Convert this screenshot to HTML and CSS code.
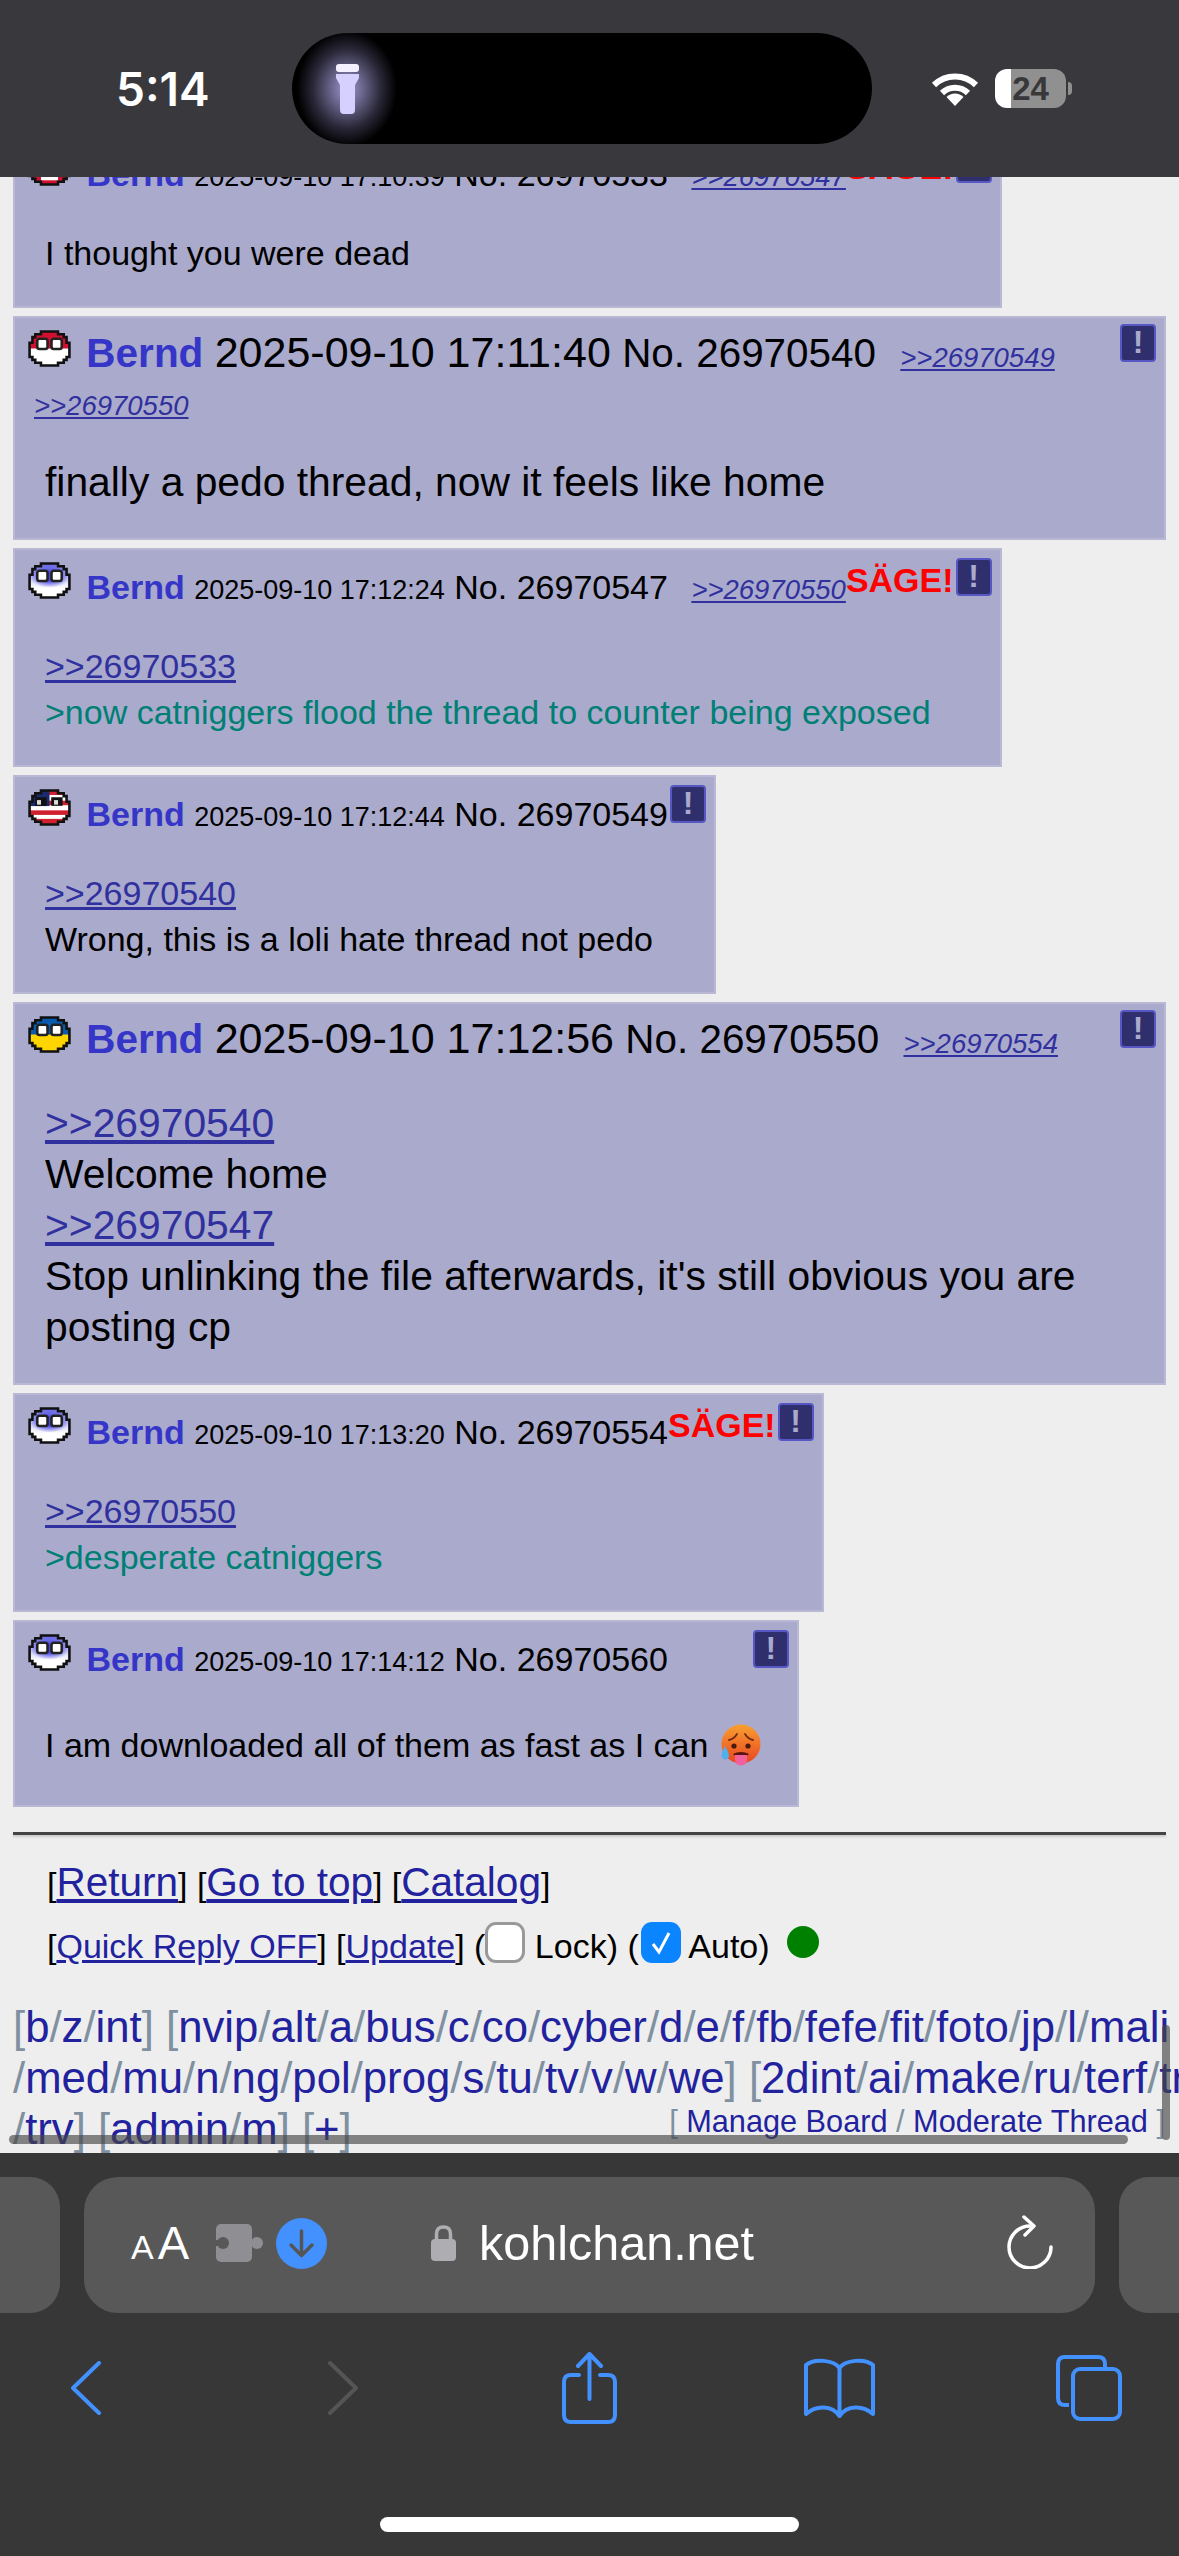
FILE: index.html
```html
<!DOCTYPE html>
<html lang="en">
<head>
    <meta charset="UTF-8">
    <meta name="viewport" content="width=device-width, initial-scale=1.0">
    <title>kohlchan.net</title>
    <link rel="stylesheet" href="styles.css">
</head>
<body>
    <!-- flag sprites -->
    <svg class="sprites" width="0" height="0">
        <defs>
            <clipPath id="ball"><path id="ball-shape" d="M5 1H11V2H13V3H14V5H15V10H14V11H13V12H11V13H5V12H3V11H2V10H1V5H2V3H3V2H5Z"/></clipPath>
            <linearGradient id="sage-fade" x1="0" y1="0" x2="0" y2="1">
                <stop offset="0.05" stop-color="#5a5ae0"/>
                <stop offset="0.35" stop-color="#b8b8f4"/>
                <stop offset="0.7" stop-color="#fff"/>
            </linearGradient>
            <radialGradient id="sage-glow">
                <stop offset="0.4" stop-color="#4a4ae0"/>
                <stop offset="1" stop-color="#4a4ae0" stop-opacity="0"/>
            </radialGradient>
            <g id="eyes">
                <rect x="3.7" y="3.6" width="3.6" height="3.6" rx="0.8" fill="#fff" stroke="#222" stroke-width="0.9"/>
                <rect x="8.7" y="3.6" width="3.6" height="3.6" rx="0.8" fill="#fff" stroke="#222" stroke-width="0.9"/>
            </g>
            <symbol id="flag-sage" viewBox="0.5 0.5 15 13">
                <g clip-path="url(#ball)">
                    <rect width="16" height="14" fill="url(#sage-fade)"/>
                    <ellipse cx="8" cy="5.500" rx="7" ry="4" fill="url(#sage-glow)"/>
                </g>
                <path d="M5 1H11V2H13V3H14V5H15V10H14V11H13V12H11V13H5V12H3V11H2V10H1V5H2V3H3V2H5Z" fill="none" stroke="#111" stroke-width="0.9"/>
                <use href="#eyes"/>
            </symbol>
            <symbol id="flag-pl" viewBox="0.5 0.5 15 13">
                <g clip-path="url(#ball)">
                    <rect width="16" height="14" fill="#fff"/>
                    <rect width="16" height="7" fill="#d01030"/>
                </g>
                <path d="M5 1H11V2H13V3H14V5H15V10H14V11H13V12H11V13H5V12H3V11H2V10H1V5H2V3H3V2H5Z" fill="none" stroke="#111" stroke-width="0.9"/>
                <use href="#eyes"/>
            </symbol>
            <symbol id="flag-red" viewBox="0.5 0.5 15 13">
                <g clip-path="url(#ball)">
                    <rect width="16" height="14" fill="#d01030"/>
                    <rect x="5" y="8" width="6" height="3.500" fill="#fff"/>
                </g>
                <path d="M5 1H11V2H13V3H14V5H15V10H14V11H13V12H11V13H5V12H3V11H2V10H1V5H2V3H3V2H5Z" fill="none" stroke="#111" stroke-width="0.9"/>
                <use href="#eyes"/>
            </symbol>
            <symbol id="flag-us" viewBox="0.5 0.5 15 13">
                <g clip-path="url(#ball)">
                    <rect width="16" height="14" fill="#fff"/>
                    <rect y="1" width="16" height="1.6" fill="#d02030"/>
                    <rect y="4.6" width="16" height="1.6" fill="#d02030"/>
                    <rect y="8" width="16" height="1.6" fill="#d02030"/>
                    <rect y="11" width="16" height="2" fill="#d02030"/>
                    <rect width="8" height="6.5" fill="#1a2a6c"/>
                    <rect x="3" y="3.4" width="4" height="3" fill="#111"/>
                    <rect x="8.6" y="3.4" width="4" height="3" fill="#111"/>
                    <rect x="3.6" y="4.4" width="1.4" height="1.6" fill="#ddd"/>
                    <rect x="9.6" y="4.4" width="1.4" height="1.6" fill="#ddd"/>
                </g>
                <path d="M5 1H11V2H13V3H14V5H15V10H14V11H13V12H11V13H5V12H3V11H2V10H1V5H2V3H3V2H5Z" fill="none" stroke="#111" stroke-width="0.9"/>
            </symbol>
            <symbol id="flag-ua" viewBox="0.5 0.5 15 13">
                <g clip-path="url(#ball)">
                    <rect width="16" height="14" fill="#ffd500"/>
                    <rect width="16" height="7" fill="#0a5cb0"/>
                </g>
                <path d="M5 1H11V2H13V3H14V5H15V10H14V11H13V12H11V13H5V12H3V11H2V10H1V5H2V3H3V2H5Z" fill="none" stroke="#111" stroke-width="0.9"/>
                <use href="#eyes"/>
            </symbol>
        </defs>
    </svg>

    <div class="phone">
        <div class="status-bar">
            <span class="clock">5:14</span>
            <div class="island">
                <svg class="torch" width="25" height="50" viewBox="0 0 25 50">
                    <rect x="1" y="0" width="23" height="8" rx="3" fill="#f4f0ff"/>
                    <path d="M1 10H24V14L20 21V46Q20 50 16 50H9Q5 50 5 46V21L1 14Z" fill="#d6d0ff"/>
                </svg>
            </div>
            <svg class="wifi" width="48" height="34" viewBox="0 0 48 34" fill="none" stroke="#fff" stroke-width="6">
                <path d="M3 13A30 30 0 0 1 45 13"/>
                <path d="M11 21A18.5 18.5 0 0 1 37 21"/>
                <path d="M24 34L15.5 25A12 12 0 0 1 32.5 25Z" fill="#fff" stroke="none"/>
            </svg>
            <div class="battery">24</div>
            <div class="battery-nub"></div>
        </div>

        <div class="content">
            <div class="posts">
                <div class="post">
                    <div class="post-head">
                        <a class="report">!</a>
                        <svg class="flag"><use href="#flag-red"/></svg>
                        <span class="name">Bernd</span>
                        <span class="date">2025-09-10 17:10:39</span>
                        <span class="num">No. 26970533</span>
                        <a class="backlink">&gt;&gt;26970547</a><span class="sage">SÄGE!</span>
                    </div>
                    <div class="post-body">
                        <div>I thought you were dead</div>
                    </div>
                </div>

                <div class="post post-big post-wrapped">
                    <div class="post-head">
                        <a class="report">!</a>
                        <svg class="flag"><use href="#flag-pl"/></svg>
                        <span class="name">Bernd</span>
                        <span class="date">2025-09-10 17:11:40</span>
                        <span class="num">No. 26970540</span>
                        <a class="backlink">&gt;&gt;26970549</a>
                        <a class="backlink">&gt;&gt;26970550</a>
                    </div>
                    <div class="post-body">
                        <div>finally a pedo thread, now it feels like home</div>
                    </div>
                </div>

                <div class="post">
                    <div class="post-head">
                        <a class="report">!</a>
                        <svg class="flag"><use href="#flag-sage"/></svg>
                        <span class="name">Bernd</span>
                        <span class="date">2025-09-10 17:12:24</span>
                        <span class="num">No. 26970547</span>
                        <a class="backlink">&gt;&gt;26970550</a><span class="sage">SÄGE!</span>
                    </div>
                    <div class="post-body">
                        <div><a class="quote">&gt;&gt;26970533</a></div>
                        <div class="green">&gt;now catniggers flood the thread to counter being exposed</div>
                    </div>
                </div>

                <div class="post">
                    <div class="post-head">
                        <a class="report">!</a>
                        <svg class="flag"><use href="#flag-us"/></svg>
                        <span class="name">Bernd</span>
                        <span class="date">2025-09-10 17:12:44</span>
                        <span class="num">No. 26970549</span>
                    </div>
                    <div class="post-body">
                        <div><a class="quote">&gt;&gt;26970540</a></div>
                        <div>Wrong, this is a loli hate thread not pedo</div>
                    </div>
                </div>

                <div class="post post-big">
                    <div class="post-head">
                        <a class="report">!</a>
                        <svg class="flag"><use href="#flag-ua"/></svg>
                        <span class="name">Bernd</span>
                        <span class="date">2025-09-10 17:12:56</span>
                        <span class="num">No. 26970550</span>
                        <a class="backlink">&gt;&gt;26970554</a>
                    </div>
                    <div class="post-body">
                        <div><a class="quote">&gt;&gt;26970540</a></div>
                        <div>Welcome home</div>
                        <div><a class="quote">&gt;&gt;26970547</a></div>
                        <div>Stop unlinking the file afterwards, it's still obvious you are posting cp</div>
                    </div>
                </div>

                <div class="post">
                    <div class="post-head">
                        <a class="report">!</a>
                        <svg class="flag"><use href="#flag-sage"/></svg>
                        <span class="name">Bernd</span>
                        <span class="date">2025-09-10 17:13:20</span>
                        <span class="num">No. 26970554</span><span class="sage">SÄGE!</span>
                    </div>
                    <div class="post-body">
                        <div><a class="quote">&gt;&gt;26970550</a></div>
                        <div class="green">&gt;desperate catniggers</div>
                    </div>
                </div>

                <div class="post">
                    <div class="post-head">
                        <a class="report">!</a>
                        <svg class="flag"><use href="#flag-sage"/></svg>
                        <span class="name">Bernd</span>
                        <span class="date">2025-09-10 17:14:12</span>
                        <span class="num">No. 26970560</span>
                    </div>
                    <div class="post-body post-body-tall">
                        <div>I am downloaded all of them as fast as I can
                            <svg class="emoji" width="40" height="42" viewBox="0 0 40 42">
                                <defs>
                                    <linearGradient id="hot" x1="0" y1="0" x2="0" y2="1">
                                        <stop offset="0" stop-color="#f8a030"/>
                                        <stop offset="1" stop-color="#ea4420"/>
                                    </linearGradient>
                                </defs>
                                <circle cx="20" cy="20" r="19.5" fill="url(#hot)"/>
                                <path d="M8 16Q13 15 16 10M32 16Q27 15 24 10" fill="none" stroke="#6a2a10" stroke-width="1.8" stroke-linecap="round"/>
                                <circle cx="13" cy="22" r="2.6" fill="#4a1a0a"/>
                                <circle cx="27" cy="22" r="2.6" fill="#4a1a0a"/>
                                <path d="M12 30Q20 26 28 30Q26 33 20 33Q14 33 12 30Z" fill="#5a1410"/>
                                <path d="M14 31H26V35Q26 41.5 20 41.5Q14 41.5 14 35Z" fill="#f0609a"/>
                                <path d="M4 22Q0 30 0.5 32Q2 36 5 35.500Q8 34 8 31Q7 27 4 22Z" fill="#4fb0ee"/>
                            </svg>
                        </div>
                    </div>
                </div>
            </div>

            <hr class="divider">

            <div class="thread-links">
                [<a>Return</a>] [<a>Go to top</a>] [<a>Catalog</a>]
            </div>
            <div class="thread-tools">
                [<a>Quick Reply OFF</a>] [<a>Update</a>] (<span class="checkbox"></span> Lock) (<span class="checkbox checkbox-on"><svg width="24" height="26" viewBox="0 0 24 26" fill="none" stroke="#fff" stroke-width="3"><path d="M4 14L10 22L20 3"/></svg></span> Auto) <span class="live-dot"></span>
            </div>

            <div class="board-nav">
                <div>[<a>b</a>/<a>z</a>/<a>int</a>] [<a>nvip</a>/<a>alt</a>/<a>a</a>/<a>bus</a>/<a>c</a>/<a>co</a>/<a>cyber</a>/<a>d</a>/<a>e</a>/<a>f</a>/<a>fb</a>/<a>fefe</a>/<a>fit</a>/<a>foto</a>/<a>jp</a>/<a>l</a>/<a>mali</a></div>
                <div>/<a>med</a>/<a>mu</a>/<a>n</a>/<a>ng</a>/<a>pol</a>/<a>prog</a>/<a>s</a>/<a>tu</a>/<a>tv</a>/<a>v</a>/<a>w</a>/<a>we</a>] [<a>2dint</a>/<a>ai</a>/<a>make</a>/<a>ru</a>/<a>terf</a>/<a>tri</a></div>
                <div>/<a>trv</a>] [<a>admin</a>/<a>m</a>] [<a>+</a>]</div>
            </div>

            <div class="manage-links">[ <a>Manage Board</a> / <a>Moderate Thread</a> ]</div>
            <div class="scroll-h"></div>
            <div class="scroll-v"></div>
        </div>

        <div class="bottom-bar">
            <div class="url-row">
                <div class="tab-peek tab-peek-left"></div>
                <div class="url-box">
                    <span class="aa"><span class="aa-small">A</span><span class="aa-big">A</span></span>
                    <svg class="puzzle" width="47" height="38" viewBox="0 0 47 38">
                        <rect width="36" height="38" rx="5" fill="#8e8e93"/>
                        <circle cx="41" cy="19" r="6" fill="#8e8e93"/>
                        <rect x="34" y="16" width="4" height="6" fill="#8e8e93"/>
                        <circle cx="7" cy="19" r="6" fill="#585858"/>
                        <rect x="0" y="16" width="5" height="6" fill="#585858"/>
                    </svg>
                    <svg class="download" width="51" height="51" viewBox="0 0 51 51">
                        <circle cx="25.5" cy="25.5" r="25.5" fill="#4391ff"/>
                        <path d="M25.5 13V37M15 27L25.5 37.5L36 27" fill="none" stroke="#555" stroke-width="3.5" stroke-linecap="round" stroke-linejoin="round"/>
                    </svg>
                    <svg class="lock" width="25" height="36" viewBox="0 0 25 36">
                        <path d="M5.5 17V9Q5.5 2 12.5 2Q19.5 2 19.5 9V17" fill="none" stroke="#aeaeb2" stroke-width="3.5"/>
                        <rect y="14" width="25" height="22" rx="4" fill="#aeaeb2"/>
                    </svg>
                    <span class="domain">kohlchan.net</span>
                    <svg class="reload" width="46" height="54" viewBox="0 0 46 54" fill="none" stroke="#fff" stroke-width="3.5" stroke-linecap="round" stroke-linejoin="round">
                        <path d="M23 11A21 21 0 1 0 44 32"/>
                        <path d="M17 2L27 11L18 20"/>
                    </svg>
                </div>
                <div class="tab-peek tab-peek-right"></div>
            </div>

            <div class="toolbar">
                <svg class="tool-back" width="30" height="54" viewBox="0 0 30 54" fill="none" stroke="#4391ff" stroke-width="4" stroke-linecap="round" stroke-linejoin="round"><path d="M28 2L2 27L28 52"/></svg>
                <svg class="tool-forward" width="30" height="54" viewBox="0 0 30 54" fill="none" stroke="#555" stroke-width="4" stroke-linecap="round" stroke-linejoin="round"><path d="M2 2L28 27L2 52"/></svg>
                <svg class="tool-share" width="55" height="72" viewBox="0 0 55 72" fill="none" stroke="#4391ff" stroke-width="4" stroke-linecap="round" stroke-linejoin="round">
                    <path d="M17 23H9Q2 23 2 30V63Q2 70 9 70H46Q53 70 53 63V30Q53 23 46 23H38"/>
                    <path d="M27.500 47V2M16 14L27.500 2L39 14"/>
                </svg>
                <svg class="tool-book" width="71" height="60" viewBox="0 0 71 60" fill="none" stroke="#4391ff" stroke-width="4" stroke-linejoin="round">
                    <path d="M35.500 10C30 2 10 0 2 7V56C12 47 28 47 35.500 58C43 47 59 47 69 56V7C61 0 41 2 35.500 10ZM35.500 10V58"/>
                </svg>
                <svg class="tool-tabs" width="66" height="66" viewBox="0 0 66 66" fill="none" stroke="#4391ff" stroke-width="4">
                    <path d="M49 12V9Q49 2 42 2H9Q2 2 2 9V43Q2 50 9 50H13"/>
                    <rect x="17" y="14" width="47" height="50" rx="7"/>
                </svg>
            </div>

            <div class="home-bar"></div>
        </div>
    </div>
</body>
</html>
```

FILE: styles.css
```css
* {
    box-sizing: border-box;
}

body {
    margin: 0;
    overflow: hidden;
    background: #eeeeee;
    font-family: "Liberation Sans", Arial, sans-serif;
    color: #000;
}

.sprites {
    display: block;
    height: 0;
}

.phone {
    display: flex;
    flex-direction: column;
    width: 1179px;
    height: 2556px;
    overflow: hidden;
}

/* status bar */
.status-bar {
    flex: none;
    display: flex;
    align-items: center;
    height: 177px;
    background: #39383d;
}

.clock {
    width: 176px;
    padding-left: 116px;
    color: #fff;
    font-family: Inter, "Liberation Sans", sans-serif;
    font-size: 46px;
    font-weight: 600;
    white-space: nowrap;
}

.island {
    display: flex;
    align-items: center;
    width: 580px;
    height: 111px;
    margin-left: 116px;
    padding-left: 43px;
    border-radius: 56px;
    background: radial-gradient(ellipse 50px 58px at 55px 50%, #a09ad0 0, #6c6890 30%, #2a2838 68%, #000 100%);
}

.wifi {
    margin-left: 59px;
}

.battery {
    width: 71px;
    height: 39px;
    margin-left: 16px;
    border-radius: 12px;
    background: linear-gradient(to right, #fff 16px, #909090 16px);
    color: #38383a;
    font-size: 33px;
    font-weight: bold;
    line-height: 39px;
    text-align: center;
}

.battery-nub {
    width: 4px;
    height: 13px;
    margin-left: 2px;
    border-radius: 0 4px 4px 0;
    background: #909090;
}

/* page */
.content {
    position: relative;
    flex: 1;
    min-height: 0;
    overflow: hidden;
    background: #eeeeee;
}

.posts {
    display: flex;
    flex-direction: column;
    align-items: flex-start;
    gap: 8px;
    margin-top: -42px;
    padding: 0 13px;
}

.post {
    width: fit-content;
    max-width: 100%;
    border: 2px solid #b9b9d5;
    background: #aaaacc;
    font-size: 34px;
}

.post-head {
    padding: 13px 0 0 13px;
    line-height: 48px;
}

.name,
.date,
.num,
.backlink {
    line-height: 1;
}

.report {
    float: right;
    width: 36px;
    height: 38px;
    margin: -5px 8px 0 2px;
    border: 2px solid #5656c4;
    border-radius: 4px;
    background: #2f2f6e;
    color: #aaaacc;
    font-size: 32px;
    font-weight: bold;
    line-height: 32px;
    text-align: center;
}

.flag {
    width: 43px;
    height: 37px;
    margin-top: -6px;
    margin-right: 6px;
    vertical-align: 0;
}

.name {
    color: #3535c8;
    font-weight: bold;
}

.date {
    font-size: 27px;
}

.backlink {
    margin-left: 14px;
    color: #30309e;
    font-size: 27.5px;
    font-style: italic;
    text-decoration: underline;
}

.backlink + .backlink {
    margin-left: 6px;
}

.sage {
    color: #ff0000;
    font-weight: bold;
    line-height: 0;
    vertical-align: 7px;
}

.post-body {
    margin-top: 32px;
    padding: 0 36px 30px 30px;
    line-height: 46px;
}

.post-body-tall {
    line-height: 60px;
}

.quote {
    color: #30309e;
    text-decoration: underline;
}

.green {
    color: #007f74;
}

.emoji {
    margin-left: 3px;
    vertical-align: -9px;
}

.post-big {
    font-size: 40.8px;
}

.post-big .flag {
    margin-right: 4px;
}

.post-big .name {
    font-size: 40.5px;
}

.post-big .date {
    font-size: 43px;
}

.post-big .num {
    font-size: 40.4px;
}

.post-big .post-head {
    padding-top: 11px;
}

.post-big .backlink {
    margin-left: 13px;
}

.post-big .backlink + .backlink {
    margin-left: 6px;
}

.post-big .post-body {
    margin-top: 35px;
    line-height: 51px;
}

.post-big.post-wrapped .post-body {
    margin-top: 32px;
}

/* footer of the thread */
.divider {
    height: 3px;
    margin: 25px 13px 0;
    border: 0;
    background: #444;
    box-shadow: 0 2px 2px #ccc;
}

.thread-links {
    margin-top: 22px;
    padding-left: 47px;
    font-size: 34px;
    line-height: 51px;
}

.thread-links a {
    font-size: 40.5px;
}

.thread-links a,
.thread-tools a {
    color: #22229e;
    text-decoration: underline;
}

.thread-tools {
    margin-top: 12px;
    padding-left: 47px;
    font-size: 34px;
    line-height: 46px;
}

.checkbox {
    display: inline-block;
    width: 40px;
    height: 41px;
    border: 3px solid #999;
    border-radius: 11px;
    background: #fff;
    vertical-align: -5px;
}

.checkbox svg {
    display: block;
    margin: 8px auto;
}

.checkbox-on {
    margin-left: 2px;
    border: 0;
    background: #0a84ff;
}

.live-dot {
    display: inline-block;
    width: 32px;
    height: 32px;
    margin-left: 8px;
    border-radius: 50%;
    background: #008000;
}

.board-nav {
    margin-top: 32px;
    padding-left: 13px;
    color: #7f90a0;
    font-size: 43.7px;
    line-height: 51px;
    white-space: nowrap;
}

.board-nav a,
.manage-links a {
    color: #22229e;
}

.manage-links {
    position: absolute;
    right: 14px;
    bottom: 13px;
    color: #7f90a0;
    font-size: 30.7px;
    line-height: 36px;
}

.scroll-h {
    position: absolute;
    left: 9px;
    bottom: 9px;
    width: 1119px;
    height: 9px;
    border-radius: 5px;
    background: rgba(70, 70, 70, 0.65);
}

.scroll-v {
    position: absolute;
    right: 9px;
    bottom: 13px;
    width: 8px;
    height: 115px;
    border-radius: 4px;
    background: rgba(70, 70, 70, 0.65);
}

/* safari bottom bar */
.bottom-bar {
    flex: none;
    height: 403px;
    padding-top: 24px;
    background: #373737;
}

.url-row {
    display: flex;
    gap: 24px;
    height: 136px;
}

.tab-peek {
    width: 60px;
    background: #585858;
}

.tab-peek-left {
    border-radius: 0 30px 30px 0;
}

.tab-peek-right {
    flex: 1;
    border-radius: 30px 0 0 30px;
}

.url-box {
    display: flex;
    align-items: center;
    width: 1011px;
    padding-left: 47px;
    border-radius: 34px;
    background: #585858;
    color: #fff;
}

.aa {
    display: inline-flex;
    align-items: baseline;
    width: 85px;
    line-height: 56px;
}

.aa-small {
    font-size: 34px;
    margin-right: 4px;
}

.aa-big {
    font-size: 47px;
}

.puzzle {
    margin-top: -4px;
}

.download {
    margin-left: 13px;
    margin-top: -4px;
}

.lock {
    margin-left: 104px;
    margin-top: -4px;
}

.domain {
    width: 528px;
    margin-left: 23px;
    font-size: 48.5px;
    margin-top: -4px;
}

.reload {
    margin-top: -6px;
}

.toolbar {
    display: flex;
    align-items: center;
    height: 80px;
    margin-top: 35px;
    padding-left: 71px;
}

.tool-forward {
    margin-left: 227px;
}

.tool-share {
    margin-left: 204px;
}

.tool-book {
    margin-left: 187px;
}

.tool-tabs {
    margin-left: 181px;
}

.home-bar {
    width: 419px;
    height: 15px;
    margin: 89px auto 0;
    border-radius: 8px;
    background: #fff;
}
```
